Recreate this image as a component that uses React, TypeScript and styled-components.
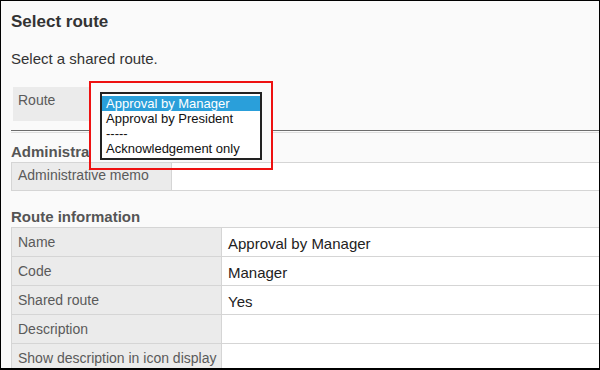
import { createGlobalStyle } from 'styled-components'
import styled from 'styled-components'

const GlobalStyle = createGlobalStyle`
  html, body {
    margin: 0;
    padding: 0;
    background: #ffffff;
  }
  body {
    font-family: "Liberation Sans", Arial, sans-serif;
  }
`

const Frame = styled.div`
  position: relative;
  box-sizing: border-box;
  width: 600px;
  height: 370px;
  overflow: hidden;
  border: 1px solid #000;
  border-bottom-width: 2px;
  background: #fafafa;
  padding: 11px 0 0 10px;
`

const Title = styled.h1`
  margin: 0;
  font-size: 17px;
  font-weight: bold;
  line-height: 20px;
  color: #333;
`

const Lead = styled.p`
  margin: 18px 0 0;
  font-size: 15px;
  line-height: 17px;
  color: #333;
`

const FormRow = styled.div`
  display: flex;
  align-items: flex-start;
  margin: 20px 0 0 2px;
  height: 34px;
`

const FormLabel = styled.div`
  box-sizing: border-box;
  width: 82px;
  height: 34px;
  background: #ebebeb;
  padding: 5px 5px 0;
  font-size: 14px;
  line-height: 16px;
  color: #5a5a5a;
`

const SelectBox = styled.div`
  margin: 3px 0 0 3px;
  width: 166px;
  height: 27px;
  background: #7dbce8;
`

const Divider = styled.div`
  margin-top: 9px;
  height: 1px;
  border-top: 1px solid #6c6c6c;
  border-bottom: 1px solid #dedede;
`

const SectionTitle = styled.h2<{ $top: number }>`
  margin: ${p => p.$top}px 0 2px;
  font-size: 15px;
  font-weight: bold;
  line-height: 17px;
  color: #555;
`

const InfoTable = styled.table`
  border-collapse: collapse;
  width: 590px;
  table-layout: fixed;
`

const Row = styled.tr<{ $h: number }>`
  height: ${p => p.$h}px;
`

const HeadCell = styled.th<{ $w: number; $pad: number }>`
  box-sizing: border-box;
  width: ${p => p.$w}px;
  background: #ebebeb;
  border: 1px solid #d5d5d5;
  padding: ${p => p.$pad}px 6px 0;
  vertical-align: top;
  text-align: left;
  font-weight: normal;
  font-size: 14px;
  line-height: 16px;
  color: #5a5a5a;
  white-space: nowrap;
`

const ValueCell = styled.td`
  background: #ffffff;
  border: 1px solid #d5d5d5;
  border-right: none;
  padding: 7px 6px 0;
  vertical-align: top;
  font-size: 15px;
  line-height: 17px;
  color: #222;
`

const Callout = styled.div`
  position: absolute;
  left: 88px;
  top: 80px;
  box-sizing: border-box;
  width: 184px;
  height: 89px;
  border: 2px solid #ee1111;
  background: linear-gradient(to bottom, #fafafa 0 79px, transparent 79px);
`

const ListPopup = styled.ul`
  position: absolute;
  left: 99px;
  top: 91px;
  box-sizing: border-box;
  width: 162px;
  height: 68px;
  margin: 0;
  padding: 2px 0;
  list-style: none;
  background: #fff;
  border: 2px solid #222;
`

const Option = styled.li<{ $active?: boolean }>`
  height: 15px;
  padding: 0 4px;
  font-size: 13px;
  line-height: 15px;
  color: ${p => (p.$active ? '#fff' : '#111')};
  background: ${p => (p.$active ? '#2a9fda' : 'transparent')};
  white-space: nowrap;
`

const routeInfo = [
  { label: 'Name', value: 'Approval by Manager' },
  { label: 'Code', value: 'Manager' },
  { label: 'Shared route', value: 'Yes' },
  { label: 'Description', value: '' },
  { label: 'Show description in icon display', value: '' },
]

const options = ['Approval by Manager', 'Approval by President', '-----', 'Acknowledgement only']

const App = () => {
  return (
    <>
      <GlobalStyle />
      <Frame>
        <Title>Select route</Title>
        <Lead>Select a shared route.</Lead>
        <FormRow>
          <FormLabel>Route</FormLabel>
          <SelectBox />
        </FormRow>
        <Divider />
        <SectionTitle $top={10}>Administrative memo</SectionTitle>
        <InfoTable>
          <tbody>
            <Row $h={28}>
              <HeadCell $w={160} $pad={4}>Administrative memo</HeadCell>
              <ValueCell />
            </Row>
          </tbody>
        </InfoTable>
        <SectionTitle $top={17}>Route information</SectionTitle>
        <InfoTable>
          <tbody>
            {routeInfo.map(item => (
              <Row $h={29} key={item.label}>
                <HeadCell $w={210} $pad={6}>{item.label}</HeadCell>
                <ValueCell>{item.value}</ValueCell>
              </Row>
            ))}
          </tbody>
        </InfoTable>
        <Callout />
        <ListPopup>
          {options.map((o, i) => (
            <Option key={i} $active={i === 0}>{o}</Option>
          ))}
        </ListPopup>
      </Frame>
    </>
  )
}

export default App
